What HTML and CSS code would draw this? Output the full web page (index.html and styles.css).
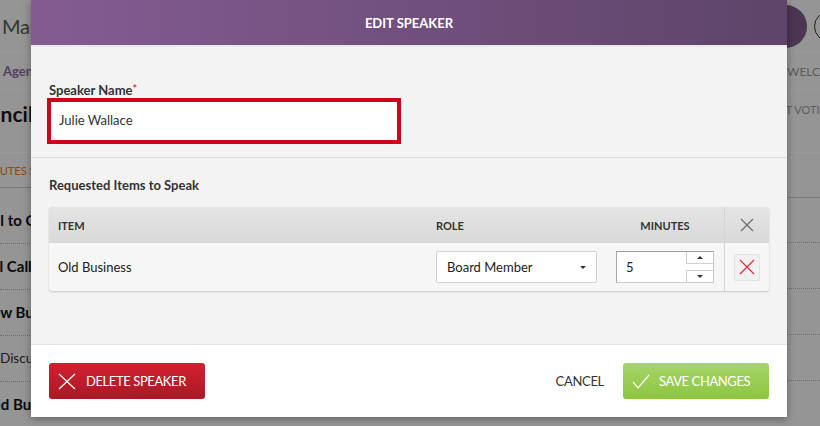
FILE: index.html
```html
<!DOCTYPE html>
<html lang="en">
<head>
<meta charset="utf-8">
<title>Edit Speaker</title>
<link rel="stylesheet" href="styles.css">
</head>
<body>
  <div class="page">
    <div class="page-left">
      <div class="app-bar"><span class="app-title">Marina Township</span></div>
      <div class="tabs"><span class="tab">Agenda</span></div>
      <div class="meeting"><h2 class="meeting-title">Council Meeting</h2></div>
      <div class="subtabs"><span class="subtab">MINUTES SPEAKERS</span></div>
      <ul class="agenda">
        <li class="agenda-item call">Call to Order</li>
        <li class="agenda-item roll">Roll Call</li>
        <li class="agenda-item new">New Business</li>
        <li class="agenda-item sub">Discussion of the budget</li>
        <li class="agenda-item old">Old Business</li>
      </ul>
    </div>
    <div class="page-right">
      <div class="app-bar"><span class="avatar"></span><span class="help">?</span></div>
      <div class="tabs"><span class="welcome">WELCOME</span></div>
      <div class="meeting"><span class="vote">START VOTING</span></div>
      <div class="subtabs tall"></div>
      <ul class="agenda flush">
        <li class="agenda-item"></li>
        <li class="agenda-item"></li>
        <li class="agenda-item"></li>
        <li class="agenda-item"></li>
      </ul>
    </div>
  </div>

  <div class="backdrop"></div>

  <div class="modal">
    <div class="modal-header">EDIT SPEAKER</div>
    <div class="modal-body">
      <div class="name-field">
        <div class="field-label">Speaker Name<span class="req">*</span></div>
        <div class="text-input">Julie Wallace</div>
      </div>
      <div class="items">
        <h3 class="items-title">Requested Items to Speak</h3>
        <div class="items-table">
          <div class="cell head">ITEM</div>
          <div class="cell head">ROLE</div>
          <div class="cell head minutes-head">MINUTES</div>
          <div class="cell head action">
            <svg width="14" height="14" viewBox="0 0 14 14"><path d="M1 1L13 13M13 1L1 13" stroke="#6b6b6b" stroke-width="1.2" fill="none"/></svg>
          </div>

          <div class="cell row">Old Business</div>
          <div class="cell row">
            <div class="select"><span>Board Member</span><i class="caret"></i></div>
          </div>
          <div class="cell row">
            <div class="number">
              <span class="number-value">5</span>
              <span class="spinner">
                <span class="spin"><i class="up"></i></span>
                <span class="spin"><i class="down"></i></span>
              </span>
            </div>
          </div>
          <div class="cell row action">
            <span class="remove">
              <svg width="16" height="16" viewBox="0 0 16 16"><path d="M1 1L15 15M15 1L1 15" stroke="#e0303a" stroke-width="1.3" fill="none"/></svg>
            </span>
          </div>
        </div>
      </div>
    </div>
    <div class="modal-footer">
      <button class="btn btn-delete">
        <svg width="18" height="17" viewBox="0 0 18 17"><path d="M1 1L17 16M17 1L1 16" stroke="#fff" stroke-width="1.2" fill="none"/></svg>
        DELETE SPEAKER
      </button>
      <button class="btn-cancel">CANCEL</button>
      <button class="btn btn-save">
        <svg width="18" height="15" viewBox="0 0 18 15"><path d="M1 8L6 14L17 1" stroke="#fff" stroke-width="1.2" fill="none"/></svg>
        SAVE CHANGES
      </button>
    </div>
  </div>
</body>
</html>
```

FILE: styles.css
```css
* {
  box-sizing: border-box;
}
body {
  margin: 0;
  width: 820px;
  height: 426px;
  overflow: hidden;
  position: relative;
  font-family: Lato, "Open Sans", sans-serif;
  color: #333;
}

/* page underneath the dialog */
.page {
  display: flex;
  height: 426px;
  background: #f8f8f8;
  white-space: nowrap;
}
.page-left {
  width: 400px;
  overflow: hidden;
}
.page-right {
  width: 33px;
  margin-left: auto;
  overflow: hidden;
}
.app-bar {
  height: 53px;
  border-bottom: 1px solid #fff;
  display: flex;
  align-items: center;
}
.app-title {
  font-size: 20px;
  font-weight: 400;
  color: #5a5a5a;
  padding-left: 2px;
  letter-spacing: -0.3px;
}
.avatar {
  flex: none;
  width: 43px;
  height: 43px;
  border-radius: 50%;
  background: #805b8c;
  margin-left: -23px;
}
.help {
  flex: none;
  width: 31px;
  height: 31px;
  margin-left: 7px;
  border: 1.5px solid #333;
  border-radius: 50%;
  font-size: 16px;
  line-height: 28px;
  text-align: center;
  color: #333;
}
.tabs {
  height: 37px;
  border-bottom: 1px solid #fff;
  display: flex;
  align-items: center;
}
.tab {
  font-size: 13px;
  font-weight: 700;
  color: #8d6aa3;
  padding-left: 3px;
}
.welcome {
  font-size: 12px;
  color: #9a9a9a;
}
.meeting {
  height: 63px;
  border-bottom: 1px solid #fff;
}
.meeting-title {
  margin: 0;
  padding-top: 11px;
  font-size: 21px;
  line-height: 26px;
  font-weight: 700;
  color: #1a1a1a;
  text-indent: -37px;
}
.vote {
  display: block;
  padding-top: 13px;
  font-size: 11px;
  color: #9a9a9a;
  text-indent: -27px;
}
.subtabs {
  height: 35px;
  border-bottom: 1px solid #c8c8c8;
  display: flex;
  align-items: center;
}
.subtabs.tall {
  height: 45px;
}
.subtab {
  font-size: 11px;
  color: #e07a2c;
  text-indent: -22px;
}
.agenda {
  list-style: none;
  margin: 0;
  padding: 10px 0 0;
}
.agenda.flush {
  padding: 0;
}
.agenda-item {
  height: 46px;
  border-bottom: 1px dotted #b5b5b5;
  font-size: 15px;
  font-weight: 700;
  line-height: 45px;
  color: #111;
}
.agenda.flush .agenda-item {
  height: 45px;
}
.agenda.flush .agenda-item + .agenda-item {
  height: 46px;
}
.call { text-indent: -21px; }
.roll { text-indent: -22px; }
.new { text-indent: -19px; }
.sub {
  font-size: 13.5px;
  font-weight: 400;
  color: #333;
}
.old { text-indent: -15px; }

.backdrop {
  position: absolute;
  inset: 0;
  background: rgba(0, 0, 0, 0.4);
}

/* dialog */
.modal {
  position: absolute;
  left: 31px;
  top: 0;
  width: 756px;
  height: 417px;
  display: flex;
  flex-direction: column;
  box-shadow: 0 2px 8px rgba(0, 0, 0, 0.35);
}
.modal-header {
  flex: none;
  height: 45px;
  display: flex;
  align-items: center;
  justify-content: center;
  background: linear-gradient(90deg, #845c92, #5e4469);
  color: #fff;
  font-size: 13px;
  font-weight: 700;
}
.modal-body {
  flex: 1;
  background: #f3f3f3;
  border-top: 2px solid #e9e9e9;
}
.name-field {
  padding: 34px 18px 15px;
  border-bottom: 1px solid #dcdcdc;
}
.field-label {
  margin-bottom: 2px;
  font-size: 13px;
  line-height: 16px;
  font-weight: 700;
  color: #333;
}
.req {
  color: #d0021b;
  font-weight: 400;
  vertical-align: 2px;
  font-size: 11px;
}
.text-input {
  width: 350px;
  height: 42px;
  padding-left: 8px;
  background: #fff;
  border: 2px solid #d0021b;
  box-shadow: 0 0 0 2px #d0021b;
  font-size: 13px;
  line-height: 36px;
  color: #333;
}
.items {
  padding: 19px 18px 0;
}
.items-title {
  margin: 0 0 14px;
  font-size: 13px;
  line-height: 16px;
  font-weight: 700;
  color: #333;
}
.items-table {
  display: grid;
  grid-template-columns: 378px 180px 117px 1fr;
  grid-template-rows: 36px 48px;
  background: #f6f6f6;
  border-radius: 3px;
  box-shadow: 0 1px 2px rgba(0, 0, 0, 0.18);
  overflow: hidden;
}
.cell {
  display: flex;
  align-items: center;
  padding-left: 9px;
}
.cell.head {
  background: linear-gradient(#e4e4e4, #d9d9d9);
  font-size: 11px;
  font-weight: 700;
  color: #333;
}
.minutes-head {
  justify-content: center;
  padding-right: 10px;
}
.cell.row {
  font-size: 13px;
  color: #222;
}
.cell.action {
  padding: 0;
  justify-content: center;
  border-left: 1px solid #d4d4d4;
}
.select {
  width: 161px;
  height: 32px;
  display: flex;
  align-items: center;
  justify-content: space-between;
  padding: 0 10px;
  background: #fff;
  border: 1px solid #d2d2d2;
  border-radius: 2px;
}
.caret {
  border-left: 3px solid transparent;
  border-right: 3px solid transparent;
  border-top: 3px solid #333;
}
.number {
  width: 98px;
  height: 32px;
  display: flex;
  background: #fff;
  border: 1px solid #c9c9c9;
  border-top-color: #9c9c9c;
  border-left-color: #a8a8a8;
}
.number-value {
  flex: 1;
  padding-left: 9px;
  line-height: 30px;
}
.spinner {
  width: 27px;
  display: flex;
  flex-direction: column;
  justify-content: space-between;
}
.spin {
  height: 12px;
  display: flex;
  align-items: center;
  justify-content: center;
  border: 1px solid #d0d0d0;
  border-top: 0;
  border-right: 0;
  background: #fff;
}
.spin + .spin {
  border-top: 1px solid #d0d0d0;
  border-bottom: 0;
}
.up {
  border-left: 3px solid transparent;
  border-right: 3px solid transparent;
  border-bottom: 3px solid #333;
}
.down {
  border-left: 3px solid transparent;
  border-right: 3px solid transparent;
  border-top: 3px solid #333;
}
.remove {
  width: 26px;
  height: 27px;
  display: flex;
  align-items: center;
  justify-content: center;
  background: #f0f0f0;
  border: 1px solid #e2e2e2;
  border-radius: 2px;
}
.modal-footer {
  flex: none;
  height: 73px;
  display: flex;
  align-items: flex-start;
  padding: 18px 18px 0;
  background: #fff;
  border-top: 1px solid #e3e3e3;
}
.btn {
  height: 36px;
  display: flex;
  align-items: center;
  gap: 10px;
  padding: 0 0 0 9px;
  border: 0;
  border-radius: 3px;
  font-family: inherit;
  font-size: 13px;
  letter-spacing: -0.4px;
  color: #fff;
}
.btn-delete {
  width: 156px;
  background: linear-gradient(#d3202f, #a81a25);
}
.btn-cancel {
  margin-left: auto;
  margin-right: 19px;
  height: 36px;
  padding: 0;
  border: 0;
  background: none;
  font-family: inherit;
  font-size: 13px;
  letter-spacing: -0.3px;
  color: #333;
}
.btn-save {
  width: 146px;
  gap: 9px;
  background: linear-gradient(#a7d46a, #8cc63f);
}
```
